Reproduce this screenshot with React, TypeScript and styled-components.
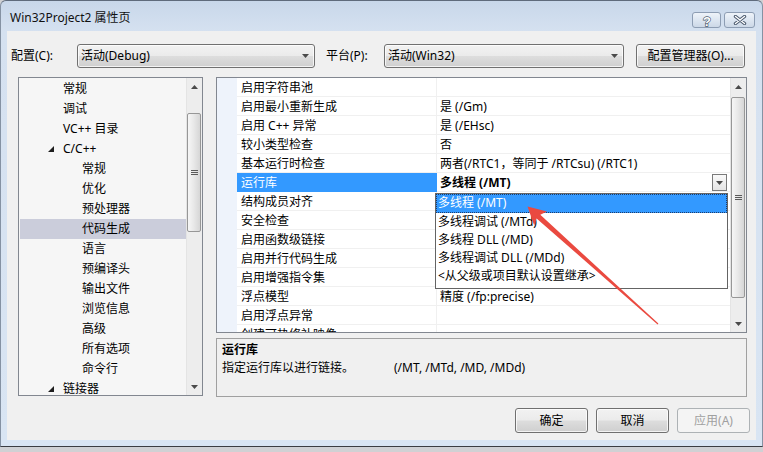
import React from "react";
import styled, { createGlobalStyle, css } from "styled-components";

const FONT = `"Noto Sans", "Noto Sans CJK SC", sans-serif`;

const Global = createGlobalStyle`
  html, body { margin: 0; padding: 0; }
  body {
    width: 763px; height: 452px; overflow: hidden;
    font-family: ${FONT}; font-size: 12px; color: #000;
    background: #d2d3d6;
  }
  * { box-sizing: border-box; }
`;

const Screen = styled.div`
  position: relative;
  width: 763px;
  height: 452px;
  overflow: hidden;
  background: #d0d1d4;
`;

const Window = styled.div`
  width: 763px;
  height: 447px;
  display: flex;
  flex-direction: column;
  background: linear-gradient(180deg, #c8d7ea 0px, #d5e1f0 30px, #d9e5f3 100%);
  border: 1px solid #8592a3;
  border-top-color: #5f6b7c;
  border-bottom-color: #3b3d42;
  border-radius: 6px 6px 0 0;
`;

const TitleBar = styled.div`
  height: 30px;
  display: flex;
  align-items: flex-start;
  padding: 0 7px 0 9px;
`;

const TitleText = styled.div`
  padding-top: 9px;
  line-height: 16px;
  font-size: 12px;
  color: #111;
`;

const CaptionGroup = styled.div`
  margin-left: auto;
  margin-top: 11px;
  display: flex;
  gap: 3px;
`;

const CaptionBtn = styled.div<{ $w: number }>`
  width: ${(p) => p.$w}px;
  height: 16px;
  border: 1px solid #8d9db3;
  border-radius: 3px;
  background: linear-gradient(180deg, #eef3f9 0%, #dde6f1 50%, #ccd8e7 100%);
  display: flex;
  align-items: center;
  justify-content: center;
`;

const Client = styled.div`
  flex: 1;
  margin: 0 6px 6px;
  background: #f0f0f0;
  display: flex;
  flex-direction: column;
`;

const TopRow = styled.div`
  margin-top: 13px;
  height: 24px;
  display: flex;
  align-items: center;
  padding-left: 4px;
`;

const FieldLabel = styled.div<{ $w: number; $ml?: number }>`
  width: ${(p) => p.$w}px;
  margin-left: ${(p) => p.$ml ?? 0}px;
  line-height: 16px;
  white-space: nowrap;
`;

const buttonFace = css`
  border: 1px solid #707070;
  border-radius: 3px;
  background: linear-gradient(180deg, #f2f2f2 0%, #ebebeb 48%, #dddddd 52%, #cfcfcf 100%);
  box-shadow: inset 0 0 0 1px rgba(255, 255, 255, 0.75);
`;

const Combo = styled.div<{ $w: number }>`
  ${buttonFace};
  width: ${(p) => p.$w}px;
  height: 24px;
  display: flex;
  align-items: center;
  padding: 0 5px 0 3px;
  line-height: 16px;
  white-space: nowrap;
`;

const ComboText = styled.span`
  flex: 1;
`;

const PushButton = styled.div<{ $w: number; $ml?: number; $disabled?: boolean }>`
  ${buttonFace};
  width: ${(p) => p.$w}px;
  margin-left: ${(p) => p.$ml ?? 0}px;
  height: ${(p) => (p.$ml !== undefined ? 24 : 25)}px;
  display: flex;
  align-items: center;
  justify-content: center;
  line-height: 16px;
  white-space: nowrap;
  ${(p) =>
    p.$disabled &&
    css`
      border-color: #adb2b5;
      background: #f4f4f4;
      box-shadow: none;
      color: #a0a0a0;
    `}
`;

const Main = styled.div`
  display: flex;
  align-items: flex-start;
  margin-top: 9px;
  padding-left: 11px;
  height: 320px;
`;

/* ---------- Tree ---------- */

const TreeBox = styled.div`
  width: 185px;
  height: 319px;
  border: 1px solid #828790;
  background: #f6f6f6;
  display: flex;
  overflow: hidden;
`;

const TreeList = styled.div`
  flex: 1;
  padding: 1px 0 0 1px;
  overflow: hidden;
`;

const TreeRow = styled.div<{ $level: number; $selected?: boolean }>`
  height: 20px;
  display: flex;
  align-items: center;
  padding-left: ${(p) => (p.$level === 1 ? 28 : 62)}px;
  white-space: nowrap;
  line-height: 16px;
  background: ${(p) => (p.$selected ? "#cbcddb" : "transparent")};
`;

const Expander = styled.span`
  width: 15px;
  display: flex;
  align-items: center;
`;

/* ---------- Scrollbar ---------- */

const ScrollTrack = styled.div`
  width: 16px;
  flex: none;
  height: 100%;
  display: flex;
  flex-direction: column;
  background: #ededed;
  border-left: 1px solid #e4e4e4;
`;

const ScrollArrow = styled.div`
  height: 17px;
  flex: none;
  display: flex;
  align-items: center;
  justify-content: center;
`;

const ScrollThumb = styled.div<{ $top: number; $h: number }>`
  margin-top: ${(p) => p.$top}px;
  width: 14px;
  height: ${(p) => p.$h}px;
  flex: none;
  border: 1px solid #979797;
  border-radius: 2px;
  background: linear-gradient(90deg, #f6f6f6 0%, #e9e9e9 45%, #d6d6d6 100%);
  display: flex;
  align-items: center;
  justify-content: center;
`;

const ScrollFill = styled.div`
  flex: 1;
`;

const ArrowGlyph = ({ up }: { up?: boolean }) => (
  <svg width="7" height="4" viewBox="0 0 7 4">
    <polygon points={up ? "3.5,0 7,4 0,4" : "0,0 7,0 3.5,4"} fill="#4a4a4a" />
  </svg>
);

const Grip = () => (
  <svg width="7" height="5" viewBox="0 0 7 5">
    <path d="M0 0.5H7M0 2.5H7M0 4.5H7" stroke="#5a5a5a" strokeWidth="1" />
  </svg>
);

const Scrollbar = ({ top, h }: { top: number; h: number }) => (
  <ScrollTrack>
    <ScrollArrow>
      <ArrowGlyph up />
    </ScrollArrow>
    <ScrollThumb $top={top} $h={h}>
      <Grip />
    </ScrollThumb>
    <ScrollFill />
    <ScrollArrow>
      <ArrowGlyph />
    </ScrollArrow>
  </ScrollTrack>
);

/* ---------- Property grid ---------- */

const RightCol = styled.div`
  margin-left: 13px;
  width: 531px;
  display: flex;
  flex-direction: column;
`;

const Grid = styled.div`
  height: 256px;
  border: 1px solid #828790;
  background: #fff;
  display: flex;
`;

const GridBody = styled.div`
  flex: 1;
  overflow: hidden;
  display: flex;
  flex-direction: column;
`;

const GridRow = styled.div`
  height: 19px;
  flex: none;
  display: flex;
`;

const Gutter = styled.div`
  width: 20px;
  flex: none;
  background: #eef3fb;
`;

const NameCell = styled.div<{ $selected?: boolean }>`
  width: 200px;
  flex: none;
  padding-left: 4px;
  padding-top: 1px;
  line-height: 17px;
  white-space: nowrap;
  overflow: hidden;
  border-right: 1px solid #f0f0f0;
  border-bottom: 1px solid #f0f0f0;
  background: ${(p) => (p.$selected ? "#3399ff" : "#fff")};
  color: ${(p) => (p.$selected ? "#fff" : "#000")};
  ${(p) => p.$selected && "border-bottom-color: #3399ff; border-right-color: #3399ff;"}
`;

const ValueCell = styled.div<{ $bold?: boolean }>`
  position: relative;
  flex: 1;
  display: flex;
  align-items: center;
  padding-left: 3px;
  padding-top: 1px;
  line-height: 17px;
  white-space: nowrap;
  border-bottom: 1px solid #f0f0f0;
  font-weight: ${(p) => (p.$bold ? 700 : 400)};
`;

const ValueText = styled.span`
  flex: 1;
`;

const DropBtn = styled.div`
  width: 15px;
  height: 17px;
  margin-right: 3px;
  border: 1px solid #7a7a7a;
  background: linear-gradient(180deg, #fafafa, #e4e4e4);
  display: flex;
  align-items: center;
  justify-content: center;
`;

const DropList = styled.div`
  position: absolute;
  left: -2px;
  top: 20px;
  width: 293px;
  height: 96px;
  z-index: 2;
  background: #fff;
  border: 1px solid #646464;
  font-weight: 400;
`;

const DropItem = styled.div<{ $active?: boolean }>`
  height: 18px;
  line-height: 18px;
  padding-left: 2px;
  white-space: nowrap;
  ${(p) =>
    p.$active &&
    css`
      height: 19px;
      background: #3399ff;
      color: #fff;
      outline: 1px dotted #1c3c6c;
      outline-offset: -1px;
    `}
`;

const Description = styled.div`
  margin-top: 5px;
  height: 59px;
  border: 1px solid #a0a0a0;
  padding: 2px 5px;
  line-height: 18px;
`;

const DescTitle = styled.div`
  font-weight: 700;
`;

const DescLine = styled.div`
  white-space: nowrap;
`;

const DescLead = styled.span`
  display: inline-block;
  width: 172px;
`;

const Footer = styled.div`
  display: flex;
  justify-content: flex-end;
  gap: 8px;
  margin-top: 11px;
  padding-right: 6px;
`;

const Annotation = styled.svg`
  position: absolute;
  left: 0;
  top: 0;
  z-index: 10;
  pointer-events: none;
`;

/* ---------- Data ---------- */

type TreeItem = { label: string; level: 1 | 2; expanded?: boolean; selected?: boolean };

const treeItems: TreeItem[] = [
  { label: "常规", level: 1 },
  { label: "调试", level: 1 },
  { label: "VC++ 目录", level: 1 },
  { label: "C/C++", level: 1, expanded: true },
  { label: "常规", level: 2 },
  { label: "优化", level: 2 },
  { label: "预处理器", level: 2 },
  { label: "代码生成", level: 2, selected: true },
  { label: "语言", level: 2 },
  { label: "预编译头", level: 2 },
  { label: "输出文件", level: 2 },
  { label: "浏览信息", level: 2 },
  { label: "高级", level: 2 },
  { label: "所有选项", level: 2 },
  { label: "命令行", level: 2 },
  { label: "链接器", level: 1, expanded: true },
];

const gridRows: { name: string; value: string; selected?: boolean }[] = [
  { name: "启用字符串池", value: "" },
  { name: "启用最小重新生成", value: "是 (/Gm)" },
  { name: "启用 C++ 异常", value: "是 (/EHsc)" },
  { name: "较小类型检查", value: "否" },
  { name: "基本运行时检查", value: "两者(/RTC1，等同于 /RTCsu) (/RTC1)" },
  { name: "运行库", value: "多线程 (/MT)", selected: true },
  { name: "结构成员对齐", value: "" },
  { name: "安全检查", value: "" },
  { name: "启用函数级链接", value: "" },
  { name: "启用并行代码生成", value: "" },
  { name: "启用增强指令集", value: "" },
  { name: "浮点模型", value: "精度 (/fp:precise)" },
  { name: "启用浮点异常", value: "" },
  { name: "创建可热修补映像", value: "" },
];

const options = [
  "多线程 (/MT)",
  "多线程调试 (/MTd)",
  "多线程 DLL (/MD)",
  "多线程调试 DLL (/MDd)",
  "<从父级或项目默认设置继承>",
];

const HelpGlyph = () => (
  <svg width="10" height="13" viewBox="0 0 10 13">
    <text
      x="5"
      y="11.5"
      textAnchor="middle"
      fontFamily="Liberation Sans, sans-serif"
      fontSize="13"
      fontWeight="bold"
      fill="#fff"
      stroke="#4b5a6e"
      strokeWidth="1.3"
      paintOrder="stroke"
    >
      ?
    </text>
  </svg>
);

const CloseGlyph = () => (
  <svg width="14" height="10" viewBox="0 0 14 10">
    <path d="M2.5 1.5 L11.5 8.5 M11.5 1.5 L2.5 8.5" stroke="#4b5a6e" strokeWidth="3.4" strokeLinecap="round" />
    <path d="M2.5 1.5 L11.5 8.5 M11.5 1.5 L2.5 8.5" stroke="#fff" strokeWidth="1.4" strokeLinecap="round" />
  </svg>
);

const ExpandedMark = () => (
  <svg width="6" height="6" viewBox="0 0 6 6">
    <polygon points="6,0 6,6 0,6" fill="#1e1e1e" />
  </svg>
);

export default function App() {
  return (
    <Screen>
      <Global />
      <Window>
        <TitleBar>
          <TitleText>Win32Project2 属性页</TitleText>
          <CaptionGroup>
            <CaptionBtn $w={29}>
              <HelpGlyph />
            </CaptionBtn>
            <CaptionBtn $w={31}>
              <CloseGlyph />
            </CaptionBtn>
          </CaptionGroup>
        </TitleBar>
        <Client>
          <TopRow>
            <FieldLabel $w={66}>配置(C):</FieldLabel>
            <Combo $w={238}>
              <ComboText>活动(Debug)</ComboText>
              <ArrowGlyph />
            </Combo>
            <FieldLabel $w={58} $ml={11}>
              平台(P):
            </FieldLabel>
            <Combo $w={240}>
              <ComboText>活动(Win32)</ComboText>
              <ArrowGlyph />
            </Combo>
            <PushButton $w={109} $ml={12}>
              配置管理器(O)...
            </PushButton>
          </TopRow>

          <Main>
            <TreeBox>
              <TreeList>
                {treeItems.map((t, i) => (
                  <TreeRow key={i} $level={t.level} $selected={t.selected}>
                    {t.level === 1 && <Expander>{t.expanded && <ExpandedMark />}</Expander>}
                    {t.label}
                  </TreeRow>
                ))}
              </TreeList>
              <Scrollbar top={18} h={119} />
            </TreeBox>

            <RightCol>
              <Grid>
                <GridBody>
                  {gridRows.map((r, i) => (
                    <GridRow key={i}>
                      <Gutter />
                      <NameCell $selected={r.selected}>{r.name}</NameCell>
                      <ValueCell $bold={r.selected}>
                        <ValueText>{r.value}</ValueText>
                        {r.selected && (
                          <>
                            <DropBtn>
                              <ArrowGlyph />
                            </DropBtn>
                            <DropList>
                              {options.map((o, j) => (
                                <DropItem key={j} $active={j === 0}>
                                  {o}
                                </DropItem>
                              ))}
                            </DropList>
                          </>
                        )}
                      </ValueCell>
                    </GridRow>
                  ))}
                </GridBody>
                <Scrollbar top={2} h={201} />
              </Grid>
              <Description>
                <DescTitle>运行库</DescTitle>
                <DescLine>
                  <DescLead>指定运行库以进行链接。</DescLead>
                  (/MT, /MTd, /MD, /MDd)
                </DescLine>
              </Description>
            </RightCol>
          </Main>

          <Footer>
            <PushButton $w={73}>确定</PushButton>
            <PushButton $w={73}>取消</PushButton>
            <PushButton $w={73} $disabled>
              应用(A)
            </PushButton>
          </Footer>
        </Client>
      </Window>

      <Annotation width="763" height="452" viewBox="0 0 763 452">
        <polygon
          points="527.5,206.5 547,211.5 540.3,214.8 658.4,323.4 657.6,324.4 536.6,218.4 534.2,225.6"
          fill="#ea4a40"
        />
      </Annotation>
    </Screen>
  );
}
